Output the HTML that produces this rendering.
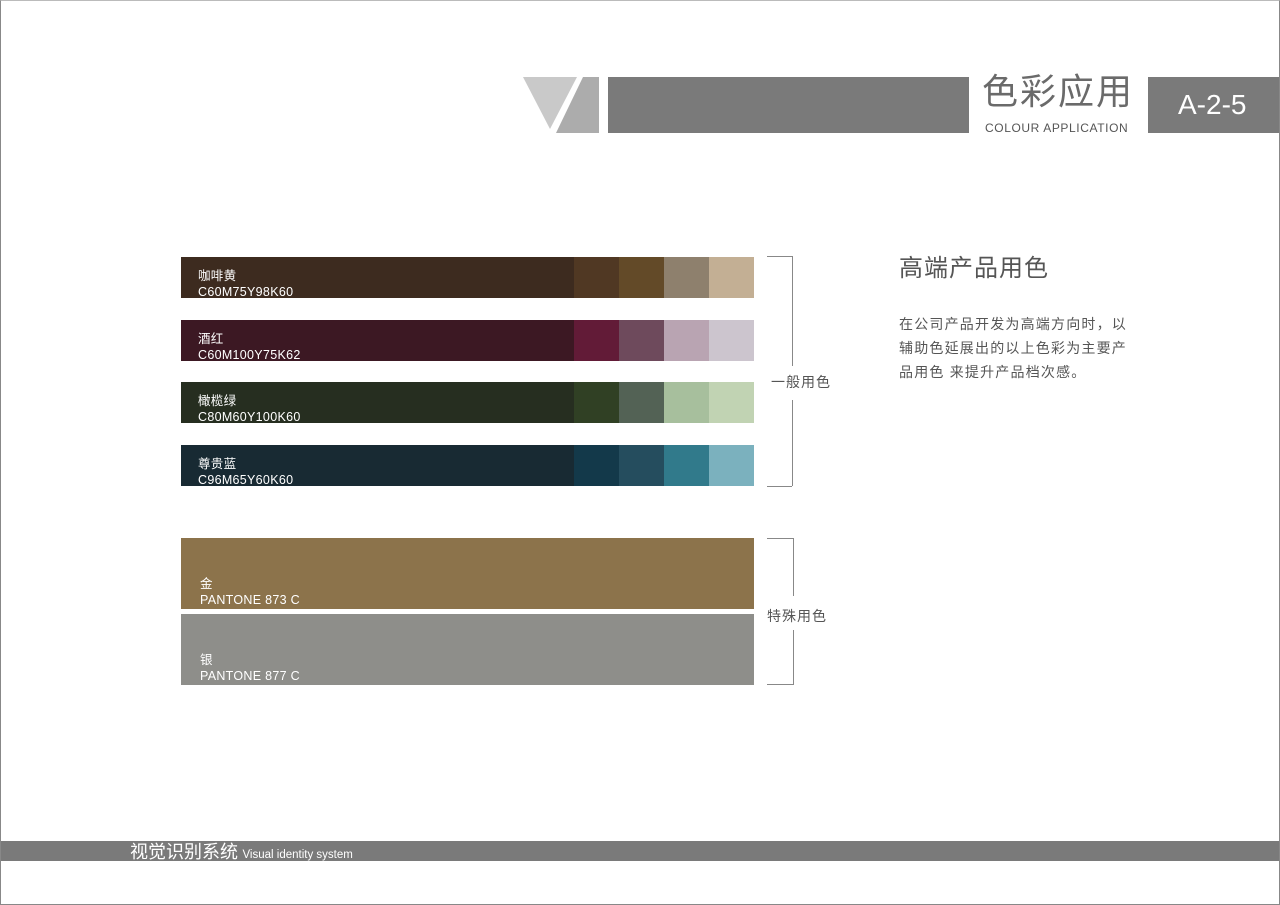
<!DOCTYPE html>
<html><head><meta charset="utf-8"><style>
*{margin:0;padding:0;box-sizing:border-box}
body{width:1280px;height:905px;background:#fff;position:relative;overflow:hidden;font-family:"Liberation Sans","Noto Sans CJK SC",sans-serif}
.a{position:absolute}
.frame{left:0;top:0;width:1280px;height:905px;border:1px solid #888;border-top:1px solid #bbb}
.bar{position:absolute;left:181px;width:573px;height:41px}
.bar .t{position:absolute;left:17px;top:11px;color:#fff;font-size:12.5px;line-height:16px;letter-spacing:0.3px}
.sw{position:absolute;top:0;height:100%;width:45px}
.big{position:absolute;left:181px;width:573px;height:71px}
.big .t{position:absolute;left:19px;top:38px;color:#fff;font-size:12.5px;line-height:16px;letter-spacing:0.3px}
.ln{position:absolute;background:#888}
</style></head><body>
<div class="a frame"></div>
<svg class="a" style="left:0;top:0" width="1280" height="140">
<polygon points="523,77 577,77 550,129" fill="#c9c9c9"/>
<polygon points="583,77 599,77 599,133 556,133" fill="#acacac"/>
</svg>
<div class="a" style="left:608px;top:77px;width:361px;height:56px;background:#7a7a7a"></div>
<div class="a" style="left:982px;top:70px;font-size:36px;color:#6a6a6a;letter-spacing:2px;line-height:44px">色彩应用</div>
<div class="a" style="left:985px;top:121px;font-size:12px;color:#555;line-height:14px;letter-spacing:0.6px">COLOUR APPLICATION</div>
<div class="a" style="left:1148px;top:77px;width:131px;height:56px;background:#7a7a7a;color:#fff;font-size:28px;line-height:56px;padding-left:30px">A-2-5</div>

<div class="bar" style="top:257px;background:#3d2b1f"><div class="t">咖啡黄<br>C60M75Y98K60</div>
<div class="sw" style="left:393px;background:#503823"></div><div class="sw" style="left:438px;background:#634a28"></div><div class="sw" style="left:483px;background:#8e806d"></div><div class="sw" style="left:528px;background:#c3af94"></div></div>
<div class="bar" style="top:320px;background:#3c1823"><div class="t">酒红<br>C60M100Y75K62</div>
<div class="sw" style="left:393px;background:#621b37"></div><div class="sw" style="left:438px;background:#6e4a5c"></div><div class="sw" style="left:483px;background:#b9a4b2"></div><div class="sw" style="left:528px;background:#ccc5ce"></div></div>
<div class="bar" style="top:382px;background:#262e20"><div class="t">橄榄绿<br>C80M60Y100K60</div>
<div class="sw" style="left:393px;background:#304024"></div><div class="sw" style="left:438px;background:#536255"></div><div class="sw" style="left:483px;background:#a7bf9d"></div><div class="sw" style="left:528px;background:#c1d3b3"></div></div>
<div class="bar" style="top:445px;background:#182a33"><div class="t">尊贵蓝<br>C96M65Y60K60</div>
<div class="sw" style="left:393px;background:#13394a"></div><div class="sw" style="left:438px;background:#254d5e"></div><div class="sw" style="left:483px;background:#317a8b"></div><div class="sw" style="left:528px;background:#7bb1be"></div></div>

<div class="big" style="top:538px;background:#8c734b"><div class="t">金<br>PANTONE 873 C</div></div>
<div class="big" style="top:614px;background:#8e8e8a"><div class="t">银<br>PANTONE 877 C</div></div>

<div class="ln" style="left:767px;top:256px;width:25px;height:1px"></div>
<div class="ln" style="left:792px;top:256px;width:1px;height:110px"></div>
<div class="ln" style="left:792px;top:400px;width:1px;height:86px"></div>
<div class="ln" style="left:767px;top:486px;width:25px;height:1px"></div>
<div class="a" style="left:771px;top:372px;font-size:14px;color:#555;letter-spacing:1px">一般用色</div>

<div class="ln" style="left:767px;top:538px;width:26px;height:1px"></div>
<div class="ln" style="left:793px;top:538px;width:1px;height:58px"></div>
<div class="ln" style="left:793px;top:630px;width:1px;height:55px"></div>
<div class="ln" style="left:767px;top:684px;width:26px;height:1px"></div>
<div class="a" style="left:767px;top:606px;font-size:14px;color:#555;letter-spacing:1px">特殊用色</div>

<div class="a" style="left:899px;top:253px;font-size:24px;color:#555;line-height:32px;letter-spacing:1px">高端产品用色</div>
<div class="a" style="left:899px;top:312px;width:236px;font-size:14px;color:#555;line-height:24px;letter-spacing:1.2px">在公司产品开发为高端方向时，以<br>辅助色延展出的以上色彩为主要产<br>品用色 来提升产品档次感。</div>

<div class="a" style="left:1px;top:841px;width:1278px;height:20px;background:#7a7a7a"></div>
<div class="a" style="left:130px;top:841px;height:20px;line-height:22px;color:#fff;white-space:nowrap"><span style="font-size:18px">视觉识别系统</span> <span style="font-size:11.5px">Visual identity system</span></div>
</body></html>
